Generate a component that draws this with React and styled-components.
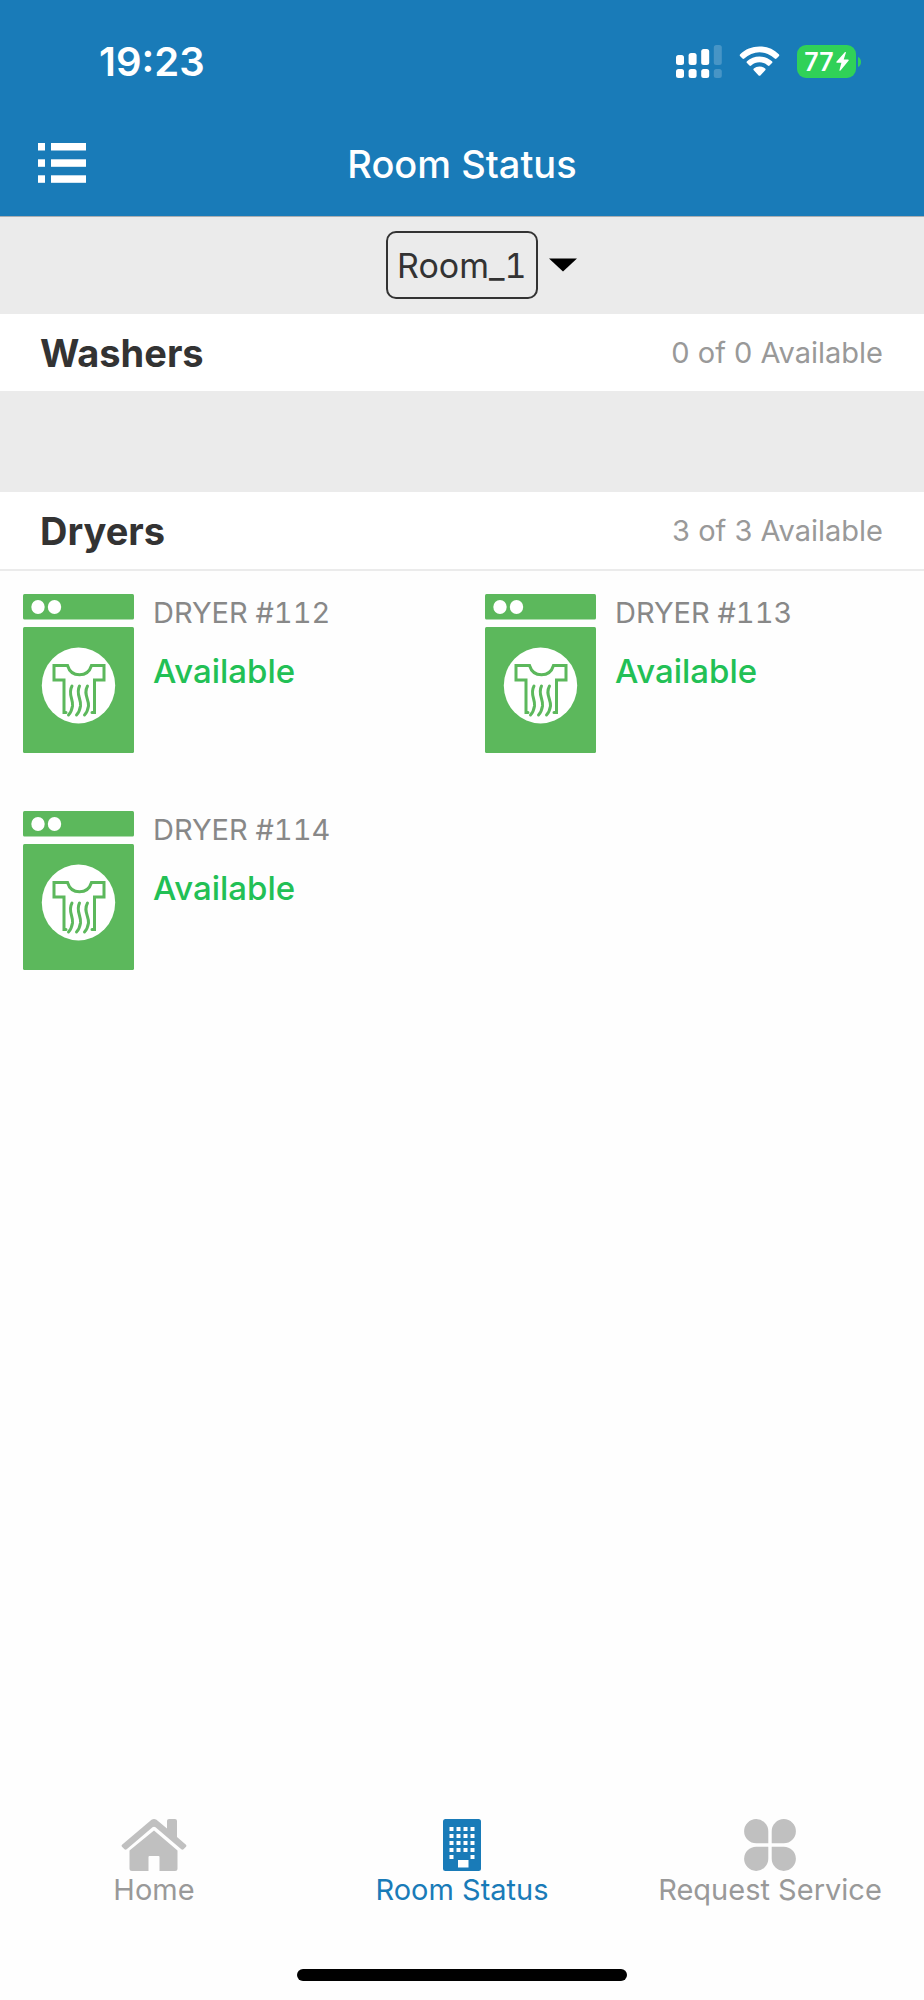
import React from 'react';
import styled, { createGlobalStyle } from 'styled-components';

const GlobalStyle = createGlobalStyle`
  * { box-sizing: border-box; }
  body {
    margin: 0;
    background: #fefefe;
    font-family: Inter, "Liberation Sans", sans-serif;
    color: #333333;
  }
  h1, h2, p, ul { margin: 0; padding: 0; }
`;

const Screen = styled.div`
  display: flex;
  flex-direction: column;
  min-height: 100vh;
`;

const Header = styled.header`
  background: #197bb8;
  color: #ffffff;
  border-bottom: 1px solid #a9aeb2;
`;

const StatusBar = styled.div`
  display: flex;
  align-items: center;
  justify-content: space-between;
  height: 111px;
  padding: 12px 63px 0 99px;
`;

const Clock = styled.time`
  font-size: 40px;
  line-height: 48px;
  font-weight: 600;
`;

const StatusIcons = styled.div`
  display: flex;
  align-items: center;
  gap: 17px;
  svg { display: block; }
`;

const Battery = styled.div`
  display: flex;
  align-items: center;
  gap: 2px;
`;

const BatteryBody = styled.div`
  display: flex;
  align-items: center;
  justify-content: center;
  gap: 2px;
  width: 59px;
  height: 33px;
  border-radius: 9px;
  background: #30d158;
  font-size: 25px;
  line-height: 32px;
  font-weight: 600;
`;

const NavBar = styled.div`
  display: grid;
  grid-template-columns: 1fr auto 1fr;
  align-items: center;
  height: 105px;
  padding: 0 38px;
`;

const MenuButton = styled.button`
  justify-self: start;
  padding: 0;
  border: 0;
  background: none;
  color: inherit;
  cursor: pointer;
  svg { display: block; }
`;

const Title = styled.h1`
  font-size: 38px;
  line-height: 48px;
  font-weight: 500;
`;

const RoomBar = styled.div`
  display: grid;
  grid-template-columns: 1fr auto 1fr;
  align-items: center;
  column-gap: 11px;
  height: 97px;
  padding-bottom: 1px;
  background: #ebebeb;
`;

const RoomSelect = styled.select`
  grid-column: 2;
  appearance: none;
  height: 68px;
  padding: 2px 9px 0;
  border: 2px solid #333333;
  border-radius: 10px;
  background: transparent;
  color: #333333;
  font: 400 34px/48px Inter, "Liberation Sans", sans-serif;
  font-variant-numeric: tabular-nums;
`;

const SectionHead = styled.div`
  display: flex;
  align-items: center;
  justify-content: space-between;
  height: 77px;
  padding: 0 41px 0 40px;
  background: #ffffff;
`;

const SectionTitle = styled.h2`
  font-size: 38px;
  line-height: 48px;
  font-weight: 700;
`;

const Count = styled.p`
  font-size: 29px;
  line-height: 40px;
  color: #999999;
`;

const EmptySpace = styled.div`
  height: 101px;
  background: #ebebeb;
`;

const Machines = styled.ul`
  display: grid;
  grid-template-columns: 1fr 1fr;
  row-gap: 58px;
  padding-top: 23px;
  border-top: 2px solid #ebebeb;
  list-style: none;
`;

const Machine = styled.li`
  display: flex;
  gap: 19px;
  padding-left: 23px;
  svg { display: block; flex: none; }
`;

const MachineName = styled.p`
  font-size: 29px;
  line-height: 38px;
  font-variant-numeric: tabular-nums;
  color: #888888;
`;

const MachineState = styled.p`
  margin-top: 17px;
  font-size: 33px;
  line-height: 44px;
  font-weight: 500;
  color: #22c055;
`;

const Tabs = styled.nav`
  display: grid;
  grid-template-columns: repeat(3, 1fr);
  margin-top: auto;
`;

const Tab = styled.a`
  display: flex;
  flex-direction: column;
  align-items: center;
  font-size: 29px;
  line-height: 38px;
  text-decoration: none;
  color: ${(p) => (p.$active ? '#197bb8' : '#999999')};
  svg { display: block; color: ${(p) => (p.$active ? '#197bb8' : '#c0c0c0')}; }
`;

const HomeIndicator = styled.div`
  display: flex;
  justify-content: center;
  padding: 60px 0 19px;
  &::after {
    content: "";
    width: 36%;
    max-width: 330px;
    height: 12px;
    border-radius: 6px;
    background: #000000;
  }
`;

const SignalIcon = () => (
  <svg width="46" height="33" viewBox="0 0 46 33" fill="#fff" aria-hidden="true">
    <rect x="0" y="10" width="8" height="10" rx="2.5" />
    <rect x="12.6" y="8" width="8" height="12" rx="2.5" />
    <rect x="25.2" y="4" width="8" height="16" rx="2.5" />
    <rect x="37.8" y="0" width="8" height="20" rx="2.5" opacity=".2" />
    <rect x="0" y="24" width="8" height="9" rx="2.5" />
    <rect x="12.6" y="24" width="8" height="9" rx="2.5" />
    <rect x="25.2" y="24" width="8" height="9" rx="2.5" />
    <rect x="37.8" y="24" width="8" height="9" rx="2.5" opacity=".2" />
  </svg>
);

const WifiIcon = () => (
  <svg width="41" height="31" viewBox="0 0 41 31" fill="#fff" aria-hidden="true">
    <path d="M20.500 0.500C28 .5 34.800 3.300 39.800 8.200Q40.800 9.200 39.800 10.200L37.500 12.500Q36.700 13.300 35.700 12.400A22 22 0 0 0 5.300 12.400Q4.300 13.300 3.500 12.500L1.200 10.200Q.2 9.200 1.200 8.200C6.200 3.300 13 .5 20.500 .5Z" />
    <path d="M20.500 10.500C25.300 10.500 29.700 12.300 33 15.300Q33.900 16.200 33 17.100L30.500 19.600Q29.700 20.300 28.800 19.500A12.500 12.500 0 0 0 12.200 19.500Q11.300 20.300 10.500 19.600L8 17.100Q7.100 16.200 8 15.300C11.300 12.300 15.700 10.500 20.500 10.500Z" />
    <path d="M20.500 20.500C22.700 20.500 24.600 21.200 26.200 22.500Q27 23.400 26.200 24.200L21.400 29.400Q20.500 30.300 19.600 29.400L14.800 24.200Q14 23.400 14.800 22.500C16.400 21.200 18.300 20.500 20.500 20.500Z" />
  </svg>
);

const BoltIcon = () => (
  <svg width="13" height="19" viewBox="0 0 13 19" fill="#fff" aria-hidden="true">
    <path d="M9 0L.4 9.800Q0 10.700 .9 10.800H5.400L3.400 18.200Q3.600 19.300 4.500 18.600L12.700 8.600Q13 7.700 12 7.600H7.700L9.900 .7Q9.900 -.3 9 0Z" />
  </svg>
);

const BatteryNub = () => (
  <svg width="3" height="10" viewBox="0 0 3 10" fill="#30d158" aria-hidden="true">
    <path d="M0 0C2 .8 3 2.800 3 5S2 9.200 0 10Z" />
  </svg>
);

const MenuIcon = () => (
  <svg width="48" height="41" viewBox="0 0 48 41" fill="currentColor" aria-hidden="true">
    {[0, 16.300, 32.300].map((y) => (
      <g key={y}>
        <rect x="0" y={y} width="7" height="7.500" />
        <rect x="13" y={y} width="35" height="7.500" />
      </g>
    ))}
  </svg>
);

const CaretIcon = () => (
  <svg width="28" height="14" viewBox="0 0 28 14" aria-hidden="true">
    <path d="M0 .5H28L14 13.500Z" />
  </svg>
);

const DryerIcon = () => (
  <svg width="111" height="159" viewBox="0 0 111 159" aria-hidden="true">
    <rect width="111" height="25.500" rx="1.500" fill="#5cb85c" />
    <rect y="33" width="111" height="126" rx="1.500" fill="#5cb85c" />
    <ellipse cx="15" cy="13" rx="6.700" ry="7" fill="#fff" />
    <ellipse cx="31.500" cy="13" rx="6.700" ry="7" fill="#fff" />
    <ellipse cx="55.500" cy="91.500" rx="36.700" ry="38" fill="#fff" />
    <g fill="none" stroke="#5cb85c" strokeWidth="3" strokeLinecap="round">
      <path d="M43 118.500H41V86H31V71.500H44.500C46.500 78 51 80.800 56.500 80.800S66.500 78 68.500 71.500H81V86H71.500V118.500H69" />
      <path d="M49 92C44.500 100 50.500 105 49.500 112Q48.500 118 45.500 121" />
      <path d="M56.500 92C52.500 100 58.500 105 57.500 112Q56.500 118 53.500 121" />
      <path d="M64.500 92C60 100 66 105 65.500 112Q64.500 118 61.500 121" />
    </g>
  </svg>
);

const HomeIcon = () => (
  <svg width="66" height="52" viewBox="0 0 66 52" fill="currentColor" aria-hidden="true">
    <path d="M30.500 .8Q33 -.6 35.500 .8L46 9.500V2Q46 0 48 0H54Q56 0 56 2V18L65 25.700Q65.800 26.700 65 27.700L62.500 30.300Q61.500 31.200 60.300 30.300L34.500 8.200Q33 7.200 31.500 8.200L5.700 30.300Q4.500 31.200 3.500 30.300L1 27.700Q.2 26.700 1 25.700Z" />
    <path d="M33 11.500L56.500 31.500V49.500Q56.500 52 54 52H38.500V38Q38.500 37 37.500 37H28.500Q27.500 37 27.500 38V52H11Q8.500 52 8.500 49.500V31.500Z" />
  </svg>
);

const BuildingIcon = () => {
  const xs = [6.500, 13.500, 20.500, 27.500];
  const ys = [8, 15, 22, 29, 36];
  return (
    <svg width="38" height="52" viewBox="0 0 38 52" aria-hidden="true">
      <rect width="38" height="52" rx="2.500" fill="currentColor" />
      <g fill="#fefefe">
        {ys.flatMap((y, row) =>
          xs
            .filter((x, col) => row < 4 || col === 0 || col === 3)
            .map((x) => <rect key={`${x}-${y}`} x={x} y={y} width="4" height="4" />)
        )}
        <rect x="15" y="41" width="10.500" height="7.500" />
      </g>
    </svg>
  );
};

const CloverIcon = () => (
  <svg width="52" height="52" viewBox="0 0 52 52" fill="currentColor" aria-hidden="true">
    <path d="M24.300 24.300H12.200A12.100 12.100 0 1 1 24.300 12.200Z" />
    <path d="M27.700 24.300V12.200A12.100 12.100 0 1 1 39.800 24.300Z" />
    <path d="M24.300 27.700V39.800A12.100 12.100 0 1 1 12.200 27.700Z" />
    <path d="M27.700 27.700H39.800A12.100 12.100 0 1 1 27.700 39.800Z" />
  </svg>
);

const dryers = [112, 113, 114];

export default function App() {
  return (
    <Screen>
      <GlobalStyle />
      <Header>
        <StatusBar>
          <Clock>19:23</Clock>
          <StatusIcons>
            <SignalIcon />
            <WifiIcon />
            <Battery>
              <BatteryBody>
                77
                <BoltIcon />
              </BatteryBody>
              <BatteryNub />
            </Battery>
          </StatusIcons>
        </StatusBar>
        <NavBar>
          <MenuButton type="button" aria-label="Menu">
            <MenuIcon />
          </MenuButton>
          <Title>Room Status</Title>
        </NavBar>
      </Header>

      <main>
        <RoomBar>
          <RoomSelect aria-label="Room" defaultValue="Room_1">
            <option>Room_1</option>
          </RoomSelect>
          <CaretIcon />
        </RoomBar>

        <section>
          <SectionHead>
            <SectionTitle>Washers</SectionTitle>
            <Count>0 of 0 Available</Count>
          </SectionHead>
          <EmptySpace />
        </section>

        <section>
          <SectionHead>
            <SectionTitle>Dryers</SectionTitle>
            <Count>3 of 3 Available</Count>
          </SectionHead>
          <Machines>
            {dryers.map((id) => (
              <Machine key={id}>
                <DryerIcon />
                <div>
                  <MachineName>DRYER #{id}</MachineName>
                  <MachineState>Available</MachineState>
                </div>
              </Machine>
            ))}
          </Machines>
        </section>
      </main>

      <Tabs>
        <Tab href="#home">
          <HomeIcon />
          Home
        </Tab>
        <Tab href="#room-status" $active aria-current="page">
          <BuildingIcon />
          Room Status
        </Tab>
        <Tab href="#request-service">
          <CloverIcon />
          Request Service
        </Tab>
      </Tabs>
      <HomeIndicator />
    </Screen>
  );
}
